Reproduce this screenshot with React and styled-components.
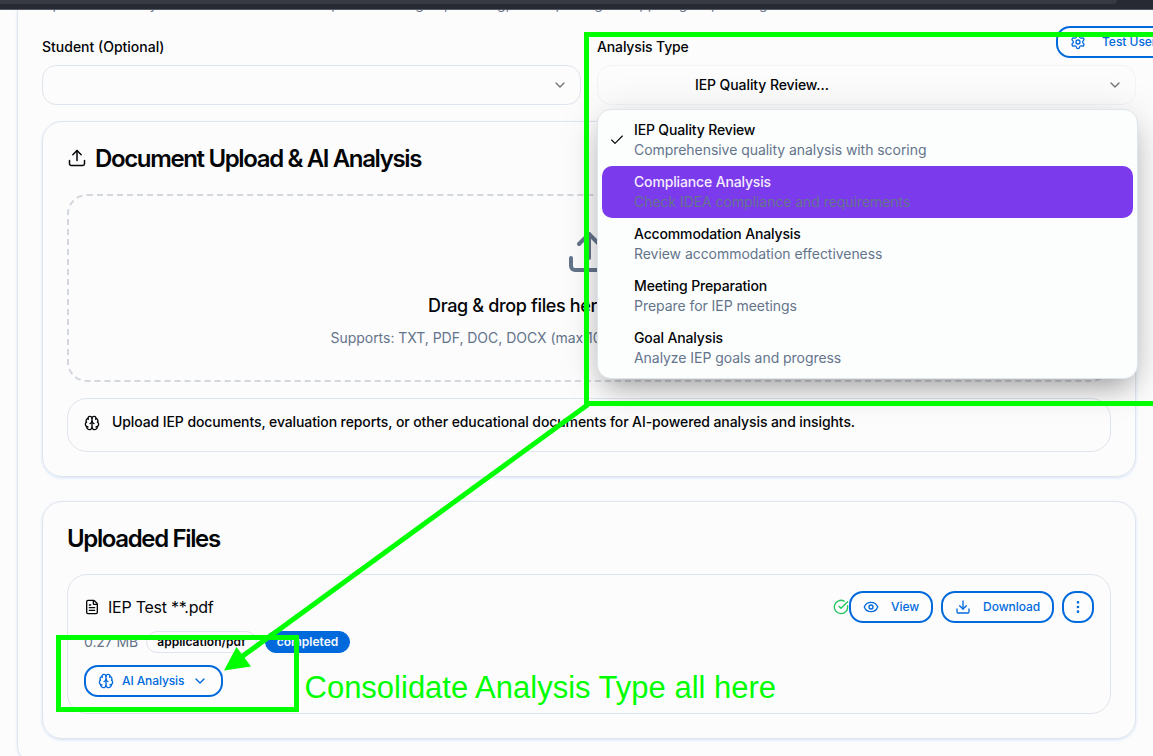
import React from "react";
import styled, { createGlobalStyle, css } from "styled-components";
import { Upload, ChevronDown, Check, Brain, FileText, CircleCheckBig, Eye, Download, EllipsisVertical, Settings } from "lucide-react";

const blue = "#006adc";
const lime = "#00ff00";
const slate = "#64748b";
const line = "#dfe5ec";

const Global = createGlobalStyle`
  *, *::before, *::after { box-sizing: border-box; }
  body { margin: 0; background: #fcfcfd; overflow: hidden; }
  h2, p { margin: 0; }
`;

const Page = styled.div`
  position: relative;
  width: 1153px;
  height: 756px;
  overflow: hidden;
  display: flex;
  flex-direction: column;
  background: #fcfcfd;
  color: #030507;
  font-family: Inter, "Liberation Sans", sans-serif;
  font-size: 14px;
  line-height: 20px;
  white-space: nowrap;
`;

const BrowserEdge = styled.div`
  flex: none;
  height: 10px;
  background: #272a32;
  border-bottom: 1px solid #525660;
`;

const AddressBar = styled.div`
  width: 1117px;
  height: 4px;
  border-bottom-right-radius: 4px;
  background: #373a43;
`;

const Viewport = styled.div`
  flex: 1;
  min-height: 0;
  overflow: hidden;
  padding-left: 17px;
`;

const Shell = styled.main`
  width: 1144px;
  height: 755px;
  padding: 0 24px;
  border: 1px solid ${line};
  border-top: 0;
  border-radius: 0 0 20px 20px;
  box-shadow: 0 1px 3px rgba(0, 106, 220, 0.12);
`;

const Intro = styled.p`
  height: 28px;
  overflow: hidden;
  color: ${slate};
  > span { display: block; margin-top: -16px; }
`;

const Filters = styled.div`
  display: grid;
  grid-template-columns: 1fr 1fr;
  gap: 16px;
  margin-bottom: 16px;
`;

const Field = styled.div`
  position: relative;
  display: flex;
  flex-direction: column;
  gap: 8px;
`;

const Label = styled.label`
  height: 19px;
  line-height: 18px;
  font-weight: 500;
  letter-spacing: ${(p) => (p.$tight ? "-0.14px" : "0")};
`;

const Select = styled.div`
  display: flex;
  align-items: center;
  justify-content: space-between;
  height: 40px;
  padding: 0 12px;
  border: 1px solid ${(p) => (p.$open ? "#f2f3f4" : line)};
  border-radius: 14px;
  font-weight: 500;
  svg { opacity: 0.55; }
`;

const SelectValue = styled.span`
  padding-left: 85px;
  letter-spacing: -0.09px;
`;

const Menu = styled.div`
  position: absolute;
  z-index: 3;
  top: 71px;
  left: 0;
  width: 541px;
  padding: 4px;
  border: 1px solid ${line};
  border-radius: 14px;
  background: #fcfefe;
  box-shadow: 0 6px 44px rgba(0, 0, 0, 0.12), 0 14px 28px -8px rgba(0, 0, 0, 0.32);
`;

const Option = styled.div`
  display: grid;
  grid-template-columns: 16px 1fr;
  column-gap: 9px;
  align-items: center;
  height: 52px;
  padding-left: 7px;
  border-radius: 10px;
  font-weight: 500;
  letter-spacing: -0.15px;
  ${(p) => p.$active && css`
    background: #7c3aed;
    color: #f3edfd;
  `}
`;

const OptionNote = styled.div`
  font-weight: 400;
  letter-spacing: -0.05px;
  color: ${slate};
`;

const Card = styled.section`
  padding: 24px;
  border: 1px solid ${line};
  border-radius: 20px;
  height: ${(p) => p.$height}px;
  box-shadow: 0 1px 3px rgba(0, 106, 220, 0.16);
  & + & { margin-top: 24px; }
`;

const Title = styled.h2`
  display: flex;
  align-items: center;
  gap: 8px;
  height: 24px;
  padding-top: 2px;
  margin-bottom: 24px;
  font-size: 24px;
  font-weight: 600;
  letter-spacing: -1.36px;
  svg { margin-top: -2px; }
`;

const DropZone = styled.div`
  display: flex;
  flex-direction: column;
  align-items: center;
  height: 188px;
  margin-bottom: 16px;
  padding-top: 32px;
  border: 2px dashed #d3d7de;
  border-radius: 20px;
  svg { color: ${slate}; }
`;

const DropHeading = styled.p`
  width: 322px;
  margin-top: 16px;
  line-height: 28px;
  font-size: 18px;
  font-weight: 500;
  letter-spacing: -0.35px;
`;

const DropHint = styled.p`
  width: 517px;
  margin-top: 8px;
  letter-spacing: -0.03px;
  color: ${slate};
`;

const Notice = styled.div`
  display: flex;
  gap: 12px;
  height: 54px;
  padding: 13px 16px;
  border: 1px solid ${line};
  border-radius: 20px;
  font-weight: 500;
  letter-spacing: -0.097px;
  svg { margin-top: 3px; }
`;

const FileCard = styled.div`
  display: flex;
  flex-direction: column;
  height: 140px;
  padding: 16px;
  border: 1px solid ${line};
  border-radius: 20px;
`;

const FileRow = styled.div`
  display: flex;
  align-items: center;
  justify-content: space-between;
  height: 32px;
`;

const FileName = styled.div`
  display: flex;
  align-items: center;
  gap: 8px;
  font-size: 16px;
  letter-spacing: -0.25px;
`;

const Actions = styled.div`
  display: flex;
  align-items: center;
  gap: 8px;
`;

const Status = styled.div`
  display: flex;
  align-items: center;
  > svg { color: #22c55e; }
`;

const Button = styled.button`
  display: flex;
  align-items: center;
  flex: none;
  gap: ${(p) => p.$gap ?? 12}px;
  width: ${(p) => p.$width}px;
  height: 32px;
  padding: 0 ${(p) => (p.$icon ? 6 : 12)}px;
  border: 2px solid ${blue};
  border-radius: 14px;
  background: #fdfdfe;
  color: ${blue};
  font: 500 12px Inter, sans-serif;
  letter-spacing: 0;
  white-space: nowrap;
  svg { flex: none; }
`;

const ButtonText = styled.span`
  padding-bottom: 2px;
  letter-spacing: ${(p) => (p.$tight ? "-0.1px" : "-0.03px")};
`;

const Meta = styled.div`
  display: flex;
  align-items: center;
  gap: 8px;
  height: 22px;
  margin: 8px 0 12px;
  color: ${slate};
  letter-spacing: -0.1px;
`;

const Badge = styled.span`
  display: flex;
  align-items: center;
  justify-content: center;
  width: ${(p) => p.$width}px;
  height: 22px;
  border: 1px solid ${(p) => (p.$solid ? blue : line)};
  border-radius: 11px;
  background: ${(p) => (p.$solid ? blue : "transparent")};
  color: ${(p) => (p.$solid ? "#f4f8fd" : "#030507")};
  font-size: 12px;
  font-weight: 600;
  letter-spacing: 0;
`;

const Floating = styled.div`
  position: absolute;
  top: 26px;
  left: 1056px;
`;

const Markup = styled.svg`
  position: absolute;
  z-index: 5;
  inset: 0;
  pointer-events: none;
`;

const MarkupNote = styled.div`
  position: absolute;
  z-index: 5;
  left: 304.5px;
  top: 668px;
  color: ${lime};
  font: 31px/40px "Liberation Sans", Arial, sans-serif;
`;

const options = [
  ["IEP Quality Review", "Comprehensive quality analysis with scoring"],
  ["Compliance Analysis", "Check IDEA compliance and requirements"],
  ["Accommodation Analysis", "Review accommodation effectiveness"],
  ["Meeting Preparation", "Prepare for IEP meetings"],
  ["Goal Analysis", "Analyze IEP goals and progress"],
];

export default function App() {
  return (
    <Page>
      <Global />
      <BrowserEdge><AddressBar /></BrowserEdge>
      <Viewport>
        <Shell>
          <Intro><span>Upload and analyze IEP documents with AI-powered insights, tracking, and reporting to support goal planning</span></Intro>
          <Filters>
            <Field>
              <Label>Student (Optional)</Label>
              <Select><span /><ChevronDown size={16} /></Select>
            </Field>
            <Field>
              <Label $tight>Analysis Type</Label>
              <Select $open><SelectValue>IEP Quality Review...</SelectValue><ChevronDown size={16} /></Select>
              <Menu>
                {options.map(([name, note], i) => (
                  <Option key={name} $active={i === 1}>
                    <span>{i === 0 && <Check size={16} strokeWidth={1.75} style={{ display: "block" }} />}</span>
                    <div>
                      <div>{name}</div>
                      <OptionNote>{note}</OptionNote>
                    </div>
                  </Option>
                ))}
              </Menu>
            </Field>
          </Filters>
          <Card $height={356}>
            <Title><Upload size={20} strokeWidth={1.8} />Document Upload &amp; AI Analysis</Title>
            <DropZone>
              <Upload size={48} />
              <DropHeading>Drag &amp; drop files here</DropHeading>
              <DropHint>Supports: TXT, PDF, DOC, DOCX (max 10MB)</DropHint>
            </DropZone>
            <Notice>
              <Brain size={16} />
              Upload IEP documents, evaluation reports, or other educational documents for AI-powered analysis and insights.
            </Notice>
          </Card>
          <Card $height={238}>
            <Title>Uploaded Files</Title>
            <FileCard>
              <FileRow>
                <FileName><FileText size={16} />IEP Test **.pdf</FileName>
                <Actions>
                  <Status>
                    <CircleCheckBig size={16} />
                    <Button $width={84}><Eye size={16} /><ButtonText>View</ButtonText></Button>
                  </Status>
                  <Button $width={113}><Download size={16} /><ButtonText>Download</ButtonText></Button>
                  <Button $width={32} $icon><EllipsisVertical size={16} /></Button>
                </Actions>
              </FileRow>
              <Meta>
                <span>0.27 MB</span>
                <Badge $width={111}>application/pdf</Badge>
                <Badge $width={85} $solid>completed</Badge>
              </Meta>
              <Button $width={139} $gap={8}><Brain size={16} /><ButtonText $tight>AI Analysis</ButtonText><ChevronDown size={16} /></Button>
            </FileCard>
          </Card>
        </Shell>
      </Viewport>
      <Floating><Button $width={124} $gap={16}><Settings size={16} /><ButtonText>Test User</ButtonText></Button></Floating>
      <Markup width="1153" height="756" viewBox="0 0 1153 756" fill="none" stroke={lime} strokeWidth="5">
        <path d="M1160 34.5H586.5V403.5H1160" />
        <path d="M58.5 637.5H296.500V709.5H58.5Z" />
        <path d="M588 404.500L240 658" />
        <path d="M224 670.500L236.500 647L251 666.500Z" fill={lime} stroke="none" />
      </Markup>
      <MarkupNote>Consolidate Analysis Type all here</MarkupNote>
    </Page>
  );
}
